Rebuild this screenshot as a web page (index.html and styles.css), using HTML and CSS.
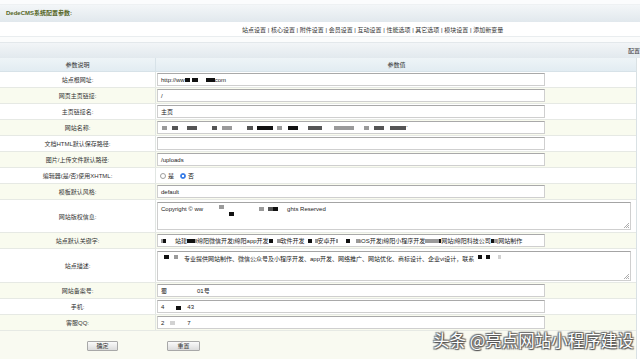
FILE: index.html
```html
<!DOCTYPE html>
<html lang="zh-CN">
<head>
<meta charset="utf-8">
<title>DedeCMS系统配置参数</title>
<link rel="stylesheet" href="styles.css">
</head>
<body>
<div class="wrap">
  <div class="topgap"></div>
  <div class="titlebar">DedeCMS系统配置参数:</div>
  <div class="tabs">站点设置 | 核心设置 | 附件设置 | 会员设置 | 互动设置 | 性能选项 | 其它选项 | 模块设置 | 添加新变量</div>
  <div class="gap"></div>
  <div class="bar3"><span class="cut">配置</span></div>
  <div class="sheet">
    <div class="row head">
      <div class="lab">参数说明</div>
      <div class="val center">参数值</div>
    </div>
    <div class="row">
      <div class="lab">站点根网址:</div>
      <div class="val"><div class="inp">http://ww<span class="b k w5"></span><span class="b k w6 ml2"></span><span class="b k w9 ml8"></span>com</div></div>
    </div>
    <div class="row cream">
      <div class="lab">网页主页链接:</div>
      <div class="val"><div class="inp">/</div></div>
    </div>
    <div class="row">
      <div class="lab">主页链接名:</div>
      <div class="val"><div class="inp">主页</div></div>
    </div>
    <div class="row cream">
      <div class="lab">网站名称:</div>
      <div class="val"><div class="inp"><span class="b g w5 ml1"></span><span class="b d w6 ml5"></span><span class="b d w10 ml9"></span><span class="b d w5 ml15"></span><span class="b g w10 ml5"></span><span class="b d w6 ml15"></span><span class="b k w16 ml4"></span><span class="b g w5 ml4"></span><span class="b k w10 ml6"></span><span class="b d w14 ml10"></span><span class="b g w20 ml12"></span><span class="b g w5 ml10"></span><span class="b d w10 ml5"></span><span class="b d w16 ml6"></span> `</div></div>
    </div>
    <div class="row">
      <div class="lab">文档HTML默认保存路径:</div>
      <div class="val"><div class="inp"></div></div>
    </div>
    <div class="row cream">
      <div class="lab">图片/上传文件默认路径:</div>
      <div class="val"><div class="inp">/uploads</div></div>
    </div>
    <div class="row">
      <div class="lab">编辑器(是/否)使用XHTML:</div>
      <div class="val"><span class="radio"></span><span class="rlab">是</span><span class="radio on"></span><span class="rlab">否</span></div>
    </div>
    <div class="row cream">
      <div class="lab">模板默认风格:</div>
      <div class="val"><div class="inp">default</div></div>
    </div>
    <div class="row tall">
      <div class="lab">网站版权信息:</div>
      <div class="val"><div class="ta">Copyright © ww<span class="b g w5 ml16 up"></span><span class="b k w5 ml5 dn"></span><span class="b g w5 ml25"></span><span class="b d w5 ml4"></span><span class="b k w5"></span><span class="ml9">ghts Reserved</span><svg class="grip" width="6" height="6" viewBox="0 0 6 6"><path d="M6 1 L1 6 M6 3 L3 6 M6 5 L5 6" stroke="#999" stroke-width="0.8"/></svg></div></div>
    </div>
    <div class="row cream">
      <div class="lab">站点默认关键字:</div>
      <div class="val"><div class="inp kw"><span class="b g w2"></span><span class="b k w3"></span><span class="ml9">站建</span><span class="b k w8"></span><span class="b g w2"></span>绵阳微信开发|绵阳app开发<span class="b k w4"></span><span class="b g w4 ml4"></span>软件开发<span class="b k w4 ml3"></span><span class="b g w3 ml3"></span>安卓开<span class="b g w2"></span><span class="b k w4 ml8"></span><span class="b g w4 ml6"></span>iOS开发|绵阳小程序开发<span class="b g w14"></span><span class="b k w2"></span>网站|绵阳科技公司<span class="b k w3"></span><span class="b g w3"></span> |网站制作</div></div>
    </div>
    <div class="row desc">
      <div class="lab">站点描述:</div>
      <div class="val"><div class="ta ta2"><span class="b k w5 ml3"></span><span class="b g w4 ml5"></span><span class="ml6">专业提供网站制作、微信公众号及小程序开发、app开发、网络推广、网站优化、商标设计、企业vi设计，联系</span><span class="b k w4 ml4"></span><span class="b k w4 ml4"></span><span class="b l w3 ml8"></span><svg class="grip" width="6" height="6" viewBox="0 0 6 6"><path d="M6 1 L1 6 M6 3 L3 6 M6 5 L5 6" stroke="#999" stroke-width="0.8"/></svg></div></div>
    </div>
    <div class="row cream">
      <div class="lab">网站备案号:</div>
      <div class="val"><div class="inp">蜀<span class="ml30">01号</span></div></div>
    </div>
    <div class="row">
      <div class="lab">手机:</div>
      <div class="val"><div class="inp">4<span class="b k w5 ml12 dn"></span><span class="ml6">43</span></div></div>
    </div>
    <div class="row cream">
      <div class="lab">客服QQ:</div>
      <div class="val"><div class="inp">2<span class="b l w5 ml6"></span><span class="ml12">7</span></div></div>
    </div>
    <div class="row btns">
      <button class="btn" type="button">确定</button>
      <button class="btn wide" type="button">重置</button>
    </div>
  </div>
  <div class="mark">头条 @亮点网站小程序建设</div>
</div>
</body>
</html>
```

FILE: styles.css
```css
* { box-sizing: border-box; }
html, body { margin: 0; padding: 0; background: #ffffff; }
.wrap {
  position: relative;
  width: 640px;
  height: 359px;
  overflow: hidden;
  font-family: "Liberation Sans", "Noto Sans CJK SC", sans-serif;
  font-size: 6px;
  color: #333;
}
.topgap { height: 5px; background: #fbfcfd; border-bottom: 1px solid #eef1f3; }
.titlebar {
  height: 17px;
  line-height: 17px;
  padding-left: 6px;
  font-weight: bold;
  color: #55661f;
  background: linear-gradient(#f3f6f8, #e1e8ed);
}
.tabs {
  height: 15px;
  line-height: 16px;
  padding-left: 242px;
  color: #333;
  background: #ffffff;
  white-space: nowrap;
  border-bottom: 1px solid #e9edef;
}
.gap { height: 5px; background: #fbfcfc; }
.bar3 {
  height: 16px;
  display: flex;
  justify-content: flex-end;
  align-items: center;
  background: linear-gradient(#f2f5f7, #e2e9ee);
  border-top: 1px solid #e3e8eb;
  overflow: hidden;
}
.cut { margin-right: 0; white-space: nowrap; color: #333; }
.sheet { width: 637px; border-right: 1px solid #d9e1e4; }
.row {
  display: flex;
  height: 16px;
  border-bottom: 1px solid #e6e9e4;
  background: #ffffff;
}
.row.cream { background: #f9fbef; }
.row.head { height: 14px; background: linear-gradient(#eef4f7, #e2ecf2); border-bottom: 1px solid #d7e2e8; }
.row.tall { height: 33px; }
.row.desc { height: 34px; }
.lab {
  width: 156px;
  flex: none;
  display: flex;
  align-items: center;
  justify-content: center;
  border-right: 1px solid #e1e6e3;
  white-space: nowrap;
}
.head .lab { border-right-color: #d7e2e8; }
.val {
  flex: 1;
  display: flex;
  align-items: center;
  padding-left: 1px;
  white-space: nowrap;
  color: #222;
}
.val.center { justify-content: center; color: #333; }
.inp {
  width: 388px;
  height: 13px;
  padding-left: 3px;
  display: flex;
  align-items: center;
  background: #ffffff;
  border: 1px solid #cfcfcf;
  border-top-color: #a9a9a9;
  overflow: hidden;
  white-space: nowrap;
}
.ta {
  position: relative;
  width: 474px;
  height: 28px;
  padding: 3px 3px 0 3px;
  background: #ffffff;
  border: 1px solid #cfcfcf;
  border-top-color: #a4a4a4;
  display: flex;
  align-items: flex-start;
  white-space: nowrap;
}
.ta2 { height: 30px; padding-top: 2px; }
.grip { position: absolute; right: 1px; bottom: 1px; }
.b { display: inline-block; height: 4px; flex: none; }
.b.k { background: #111; }
.b.d { background: #555; }
.b.g { background: #9a9a9a; }
.b.l { background: #d2d2d2; }
.up { margin-top: -2px; }
.dn { margin-top: 3px; }
.ta .b { margin-top: 1px; }
.ta .b.up { margin-top: -1px; }
.ta .b.dn { margin-top: 6px; }
.w2 { width: 2px; } .w3 { width: 3px; } .w4 { width: 4px; } .w5 { width: 5px; }
.w6 { width: 6px; } .w8 { width: 8px; } .w9 { width: 9px; } .w10 { width: 10px; }
.w14 { width: 14px; } .w16 { width: 16px; } .w20 { width: 20px; }
.ml1 { margin-left: 1px; } .ml2 { margin-left: 2px; } .ml3 { margin-left: 3px; }
.ml4 { margin-left: 4px; } .ml5 { margin-left: 5px; } .ml6 { margin-left: 6px; }
.ml8 { margin-left: 8px; } .ml9 { margin-left: 9px; } .ml10 { margin-left: 10px; }
.ml12 { margin-left: 12px; } .ml15 { margin-left: 15px; } .ml16 { margin-left: 16px; }
.ml25 { margin-left: 25px; } .ml30 { margin-left: 30px; }
.radio {
  display: inline-block;
  width: 6px;
  height: 6px;
  border-radius: 50%;
  border: 1px solid #9d9d9d;
  background: #fff;
  margin-left: 3px;
}
.radio.on {
  margin-left: 6px;
  border: 1.5px solid #3a7ee8;
  background: radial-gradient(circle, #ffffff 0 1px, #3a7ee8 1.3px);
}
.rlab { margin-left: 2px; }
.row.btns {
  height: 29px;
  border-bottom: none;
  background: #f9faf1;
  align-items: center;
  padding-left: 87px;
  gap: 49px;
}
.btn {
  font-family: "Liberation Sans", "Noto Sans CJK SC", sans-serif;
  font-size: 6px;
  color: #333;
  width: 31px;
  height: 10px;
  padding: 0;
  line-height: 8px;
  border: 1px solid #a8a8a8;
  border-radius: 1px;
  background: linear-gradient(#fafafa, #dcdcdc);
}
.btn.wide { width: 33px; }
.mark {
  position: absolute;
  left: 433px;
  top: 330px;
  font-family: "Noto Sans CJK SC", sans-serif;
  font-size: 16.5px;
  line-height: 20px;
  color: #ffffff;
  white-space: nowrap;
  text-shadow: 0 0 1px #444, 1px 1px 1px #555, -1px -1px 1px #777, 1px -1px 1px #777, -1px 1px 1px #777;
}
```
